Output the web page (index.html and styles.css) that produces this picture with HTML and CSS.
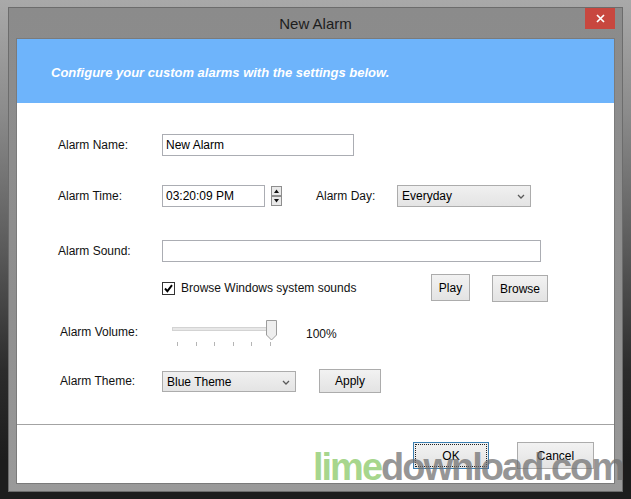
FILE: index.html
```html
<!DOCTYPE html>
<html>
<head>
<meta charset="utf-8">
<title>New Alarm</title>
<link rel="stylesheet" href="styles.css">
</head>
<body>
<div class="window">
  <div class="titlebar">
    <span></span>
    <span class="title">New Alarm</span>
    <span class="close"><svg width="9" height="9" viewBox="0 0 9 9"><path d="M1 1L8 8M8 1L1 8" stroke="#fff" stroke-width="1.7"/></svg></span>
  </div>
  <div class="client">
    <div class="banner">Configure your custom alarms with the settings below.</div>
    <div class="form">
      <div class="row r1">
        <span class="label">Alarm Name:</span>
        <div class="textbox w-name">New Alarm</div>
      </div>
      <div class="row r2">
        <span class="label">Alarm Time:</span>
        <div class="textbox w-time">03:20:09 PM</div>
        <svg class="spinner" width="11" height="20" viewBox="0 0 11 20">
          <rect x="0.5" y="0.5" width="10" height="9" fill="#e9e9e9" stroke="#8e8e8e"/>
          <rect x="0.5" y="10.5" width="10" height="9" fill="#e9e9e9" stroke="#8e8e8e"/>
          <polygon points="3,7 8,7 5.5,3.5" fill="#111"/>
          <polygon points="3,13 8,13 5.5,16.5" fill="#111"/>
        </svg>
        <span class="label day-label">Alarm Day:</span>
        <div class="combo w-day"><span>Everyday</span><svg width="8" height="5" viewBox="0 0 8 5"><polyline points="1,1 4,4 7,1" fill="none" stroke="#5a5a5a" stroke-width="1.3"/></svg></div>
      </div>
      <div class="row r3">
        <span class="label">Alarm Sound:</span>
        <div class="textbox w-sound"></div>
      </div>
      <div class="row r4">
        <div class="check">
          <svg width="13" height="13" viewBox="0 0 13 13"><rect x="0.5" y="0.5" width="12" height="12" fill="#fff" stroke="#333"/><path d="M3 6.5L5.4 9.2L10 3.2" fill="none" stroke="#000" stroke-width="1.9"/></svg>
          <span class="check-text">Browse Windows system sounds</span>
        </div>
        <div class="btn play">Play</div>
        <div class="btn browse">Browse</div>
      </div>
      <div class="row r5">
        <span class="label">Alarm Volume:</span>
        <svg class="slider" width="110" height="28" viewBox="0 0 110 28">
          <rect x="3.5" y="9.5" width="98" height="3" fill="#e7e7e7" stroke="#d3d3d3"/>
          <g stroke="#b5b5b5" stroke-width="1">
            <line x1="8.5" y1="24" x2="8.5" y2="28"/>
            <line x1="27.5" y1="24" x2="27.5" y2="28"/>
            <line x1="45.5" y1="24" x2="45.5" y2="28"/>
            <line x1="64.5" y1="24" x2="64.5" y2="28"/>
            <line x1="82.5" y1="24" x2="82.5" y2="28"/>
            <line x1="101.5" y1="24" x2="101.5" y2="28"/>
          </g>
          <polygon points="97.5,2.5 107.5,2.5 107.5,17 102.5,22 97.5,17" fill="#eeeeee" stroke="#9c9c9c"/>
        </svg>
        <span class="pct">100%</span>
      </div>
      <div class="row r6">
        <span class="label">Alarm Theme:</span>
        <div class="combo w-theme"><span>Blue Theme</span><svg width="8" height="5" viewBox="0 0 8 5"><polyline points="1,1 4,4 7,1" fill="none" stroke="#5a5a5a" stroke-width="1.3"/></svg></div>
        <div class="btn apply">Apply</div>
      </div>
    </div>
    <div class="sep"></div>
    <div class="footer">
      <div class="btn ok">OK</div>
      <div class="btn cancel">Cancel</div>
    </div>
  </div>
</div>
<div class="watermark"><span class="lime">lime</span><span class="dl">download.com</span></div>
</body>
</html>
```

FILE: styles.css
```css
* { box-sizing: border-box; }
html, body { margin: 0; }
body {
  width: 631px;
  height: 499px;
  overflow: hidden;
  position: relative;
  background: linear-gradient(180deg, #a9a9a9 0px, #8c8c8c 110px, #5a5a5a 250px, #2c2c2c 370px, #1d1d1d 460px);
  font-family: "Liberation Sans", Arial, sans-serif;
  font-size: 12px;
  color: #111;
}
.window {
  margin: 8px 0 0 9px;
  width: 613px;
  height: 483px;
  background: linear-gradient(180deg, #8b8b8b 0px, #8f8f8f 300px, #9a9a9a 483px);
  box-shadow: 0 0 0 1px #6c6c6c;
  display: flex;
  flex-direction: column;
}
.titlebar {
  height: 31px;
  display: grid;
  grid-template-columns: 1fr auto 1fr;
  align-items: center;
}
.title {
  font-size: 15px;
  color: #1d1d1d;
}
.close {
  justify-self: end;
  align-self: start;
  width: 30px;
  height: 21px;
  margin-right: 7px;
  background: #c8473f;
  display: flex;
  align-items: center;
  justify-content: center;
}
.client {
  margin: 0 8px;
  height: 444px;
  background: #fff;
  display: flex;
  flex-direction: column;
  box-shadow: 0 0 0 1px #7b7b7b;
}
.banner {
  height: 64px;
  flex: none;
  background: #6eb4fb;
  color: #fff;
  font-weight: bold;
  font-style: italic;
  font-size: 13px;
  padding: 2px 0 0 34px;
  display: flex;
  align-items: center;
}
.form {
  height: 321px;
  flex: none;
  display: flex;
  flex-direction: column;
}
.row {
  display: flex;
  align-items: center;
  padding-left: 41px;
  flex: none;
}
.label { width: 104px; color: #111; }
.r1 { margin-top: 31px; height: 22px; }
.r2 { margin-top: 29px; height: 22px; }
.r3 { margin-top: 33px; height: 22px; }
.r4 { margin-top: 12px; height: 28px; padding-left: 145px; align-items: flex-start; }
.r5 { margin-top: 16px; height: 28px; padding-left: 43px; }
.r6 { margin-top: 23px; height: 24px; padding-left: 43px; }
.r5 .label, .r6 .label { width: 102px; }

.textbox {
  height: 22px;
  border: 1px solid #abadb3;
  background: #fff;
  padding: 0 3px;
  display: flex;
  align-items: center;
  color: #000;
}
.w-name { width: 192px; }
.w-time { width: 103px; }
.w-sound { width: 379px; }
.spinner { margin-left: 6px; }
.day-label { margin-left: 34px; width: 81px; }

.combo {
  height: 22px;
  border: 1px solid #acacac;
  background: linear-gradient(180deg, #f0f0f0, #e4e4e4);
  padding: 0 5px 0 4px;
  display: flex;
  align-items: center;
  justify-content: space-between;
  color: #000;
}
.w-day { width: 134px; }
.w-theme { width: 134px; height: 21px; align-items: flex-start; padding-top: 3px; }
.w-theme svg { margin-top: 5px; }

.check {
  width: 269px;
  height: 28px;
  display: flex;
  align-items: center;
}
.check-text { margin-left: 6px; color: #111; }

.btn {
  display: flex;
  align-items: center;
  justify-content: center;
  border: 1px solid #acacac;
  background: linear-gradient(180deg, #f2f2f2, #e3e3e3);
  color: #000;
  height: 27px;
}
.play { width: 39px; }
.browse { width: 56px; margin-left: 22px; margin-top: 1px; }
.apply { width: 62px; height: 24px; margin-left: 23px; }

.slider { margin-left: 7px; }
.pct { margin-left: 27px; margin-top: 4px; color: #111; }

.sep { height: 1px; background: #a3a3a3; flex: none; }
.footer {
  display: flex;
  justify-content: flex-end;
  gap: 28px;
  padding: 17px 20px 0 0;
}
.ok {
  width: 76px;
  border-color: #3c7fb1;
  outline: 1px dotted #222;
  outline-offset: -3px;
}
.cancel { width: 77px; }

.watermark {
  position: absolute;
  left: 313px;
  top: 448px;
  font-family: "Liberation Sans", Arial, sans-serif;
  font-weight: bold;
  font-size: 38px;
  line-height: 38px;
  letter-spacing: -2px;
  white-space: nowrap;
}
.lime { color: rgba(128, 196, 90, 0.7); }
.dl { color: rgba(110, 110, 110, 0.72); }
```
